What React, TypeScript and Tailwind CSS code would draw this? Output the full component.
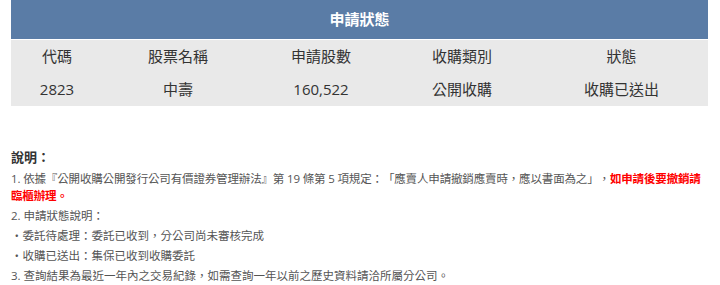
const cols = ["w-[92px]", "w-[150px]", "w-[136px]", "w-[146px]", "flex-1"];

const headers = ["代碼", "股票名稱", "申請股數", "收購類別", "狀態"];
const values = ["2823", "中壽", "160,522", "公開收購", "收購已送出"];

export default function App() {
  return (
    <div
      className="w-[720px] h-[285px] bg-white px-[11px] overflow-hidden [text-spacing-trim:space-all]"
      style={{ fontFamily: '"Open Sans", "Noto Sans CJK TC", sans-serif' }}
    >
      {/* 申請狀態 table */}
      <div className="w-[697px]">
        <div className="h-[39px] bg-[#5a7ca6] flex items-center justify-center text-white text-[15px] font-bold">
          申請狀態
        </div>
        <div className="h-[1px] bg-white" />
        <div className="bg-[#e9e9e9] text-[#333] text-[15px]">
          <div className="flex h-[33px] items-center">
            {headers.map((h, i) => (
              <div key={h} className={`${cols[i]} text-center`}>
                {h}
              </div>
            ))}
          </div>
          <div className="flex h-[33px] items-center">
            {values.map((v, i) => (
              <div key={v} className={`${cols[i]} text-center`}>
                {v}
              </div>
            ))}
          </div>
        </div>
      </div>

      {/* 說明 */}
      <div className="mt-[43px] text-[11.5px] leading-[17px] text-[#555]">
        <div className="text-[13px] font-bold text-[#333] mb-[4px]">說明：</div>
        <div className="mb-[3px] tracking-[-0.15px]">
          1. 依據『公開收購公開發行公司有價證券管理辦法』第 19 條第 5 項規定：「應賣人申請撤銷應賣時，應以書面為之」，<span className="text-[#ff0000] font-bold">如申請後要撤銷請臨櫃辦理。</span>
        </div>
        <div className="mb-[3px]">2. 申請狀態說明：</div>
        <div className="mb-[3px]">・委託待處理：委託已收到，分公司尚未審核完成</div>
        <div className="mb-[3px]">・收購已送出：集保已收到收購委託</div>
        <div>3. 查詢結果為最近一年內之交易紀錄，如需查詢一年以前之歷史資料請洽所屬分公司。</div>
      </div>
    </div>
  );
}
